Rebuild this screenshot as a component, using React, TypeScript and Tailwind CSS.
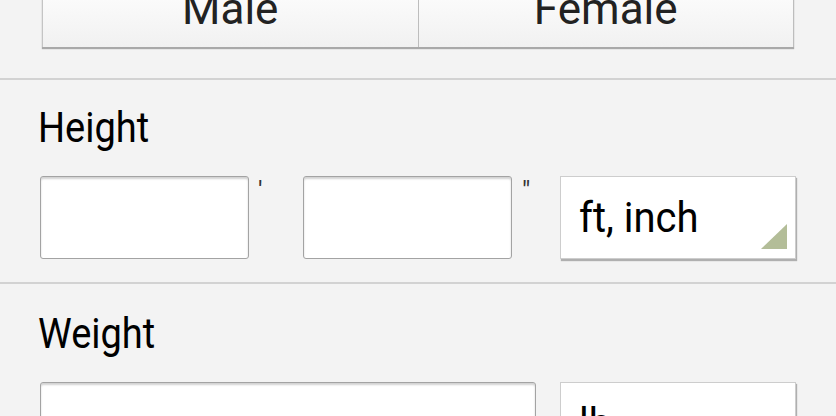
const font = { fontFamily: 'Roboto, "Noto Sans", sans-serif' }

function TextBox({ width }: { width: string }) {
  return (
    <div
      className={`${width} h-[83px] shrink-0 rounded-[3px] border border-[#a3a3a3] bg-white shadow-[inset_0_2px_2px_rgba(0,0,0,0.18)]`}
    />
  )
}

function Spinner({ label, arrow = true }: { label: string; arrow?: boolean }) {
  return (
    <div className="relative h-[83px] w-[236px] shrink-0 border border-[#cdcdcd] bg-white shadow-[1px_2px_1px_rgba(0,0,0,0.28)]">
      <span className="absolute left-[18px] top-[23px] inline-block origin-bottom scale-y-[1.08] text-[40px] leading-none text-black">
        {label}
      </span>
      {arrow && (
        <svg className="absolute bottom-[9px] right-[8px]" width="26" height="25" viewBox="0 0 26 25">
          <polygon points="26,0 26,25 0,25" fill="#b3bd98" />
        </svg>
      )}
    </div>
  )
}

export default function App() {
  return (
    <div className="h-[416px] w-[836px] overflow-hidden bg-[#f3f3f3]" style={font}>
      {/* gender toggle */}
      <div className="mx-[42px] mt-[-24px] flex h-[71px] shadow-[0_2px_1px_rgba(0,0,0,0.3)]">
        <button className="flex flex-1 items-end justify-center border-l border-[#c4c4c4] bg-gradient-to-b from-white to-[#f1f1f1] pb-[16px] text-[44px] leading-none text-[#222]">
          Male
        </button>
        <button className="flex flex-1 items-end justify-center border-l border-r border-[#bdbdbd] bg-gradient-to-b from-white to-[#f1f1f1] pb-[16px] text-[44px] leading-none text-[#222]">
          Female
        </button>
      </div>

      <div className="mt-[31px] h-[2px] bg-[#d2d2d2]" />

      {/* height */}
      <div className="px-[38px] pt-[31px] leading-none">
        <span className="inline-block origin-bottom scale-y-[1.1] text-[38px] text-black">Height</span>
      </div>
      <div className="mt-[27px] flex pl-[40px]">
        <TextBox width="w-[209px]" />
        <div className="w-[54px] shrink-0 pl-[9px] pt-[1px] text-[26px] leading-none text-[#333]">'</div>
        <TextBox width="w-[209px]" />
        <div className="w-[48px] shrink-0 pl-[10px] pt-[1px] text-[26px] leading-none text-[#333]">"</div>
        <Spinner label="ft, inch" />
      </div>

      <div className="mt-[23px] h-[2px] bg-[#d2d2d2]" />

      {/* weight */}
      <div className="px-[38px] pt-[33px] leading-none">
        <span className="inline-block origin-bottom scale-y-[1.1] text-[38px] text-black">Weight</span>
      </div>
      <div className="mt-[27px] flex gap-[24px] pl-[40px]">
        <TextBox width="w-[496px]" />
        <Spinner label="lb" arrow={false} />
      </div>
    </div>
  )
}
